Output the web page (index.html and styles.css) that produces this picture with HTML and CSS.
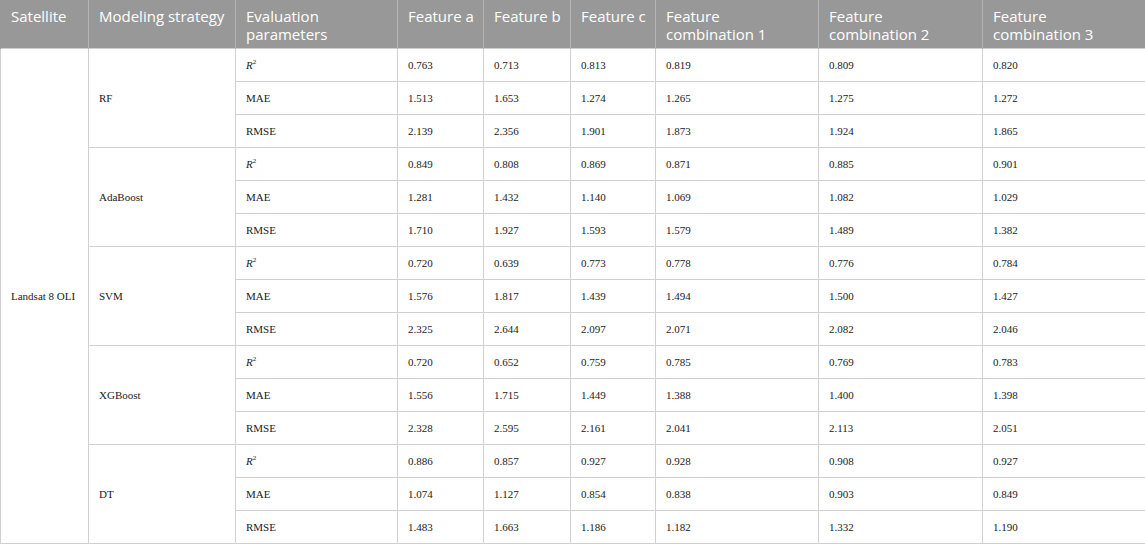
FILE: index.html
```html
<!DOCTYPE html>
<html>
<head>
<meta charset="utf-8">
<link rel="stylesheet" href="styles.css">
</head>
<body>
<table class="tbl">
<colgroup>
<col class="c1"><col class="c2"><col class="c3"><col class="c4"><col class="c5"><col class="c6"><col class="c7"><col class="c8"><col class="c9">
</colgroup>
<thead>
<tr>
<th>Satellite</th><th>Modeling strategy</th><th>Evaluation parameters</th><th>Feature a</th><th>Feature b</th><th>Feature c</th><th>Feature combination 1</th><th>Feature combination 2</th><th>Feature combination 3</th>
</tr>
</thead>
<tbody>
<tr><td rowspan="15" class="mid">Landsat 8 OLI</td><td rowspan="3" class="mid">RF</td><td><i>R</i><sup>2</sup></td><td>0.763</td><td>0.713</td><td>0.813</td><td>0.819</td><td>0.809</td><td>0.820</td></tr>
<tr><td>MAE</td><td>1.513</td><td>1.653</td><td>1.274</td><td>1.265</td><td>1.275</td><td>1.272</td></tr>
<tr><td>RMSE</td><td>2.139</td><td>2.356</td><td>1.901</td><td>1.873</td><td>1.924</td><td>1.865</td></tr>
<tr><td rowspan="3" class="mid">AdaBoost</td><td><i>R</i><sup>2</sup></td><td>0.849</td><td>0.808</td><td>0.869</td><td>0.871</td><td>0.885</td><td>0.901</td></tr>
<tr><td>MAE</td><td>1.281</td><td>1.432</td><td>1.140</td><td>1.069</td><td>1.082</td><td>1.029</td></tr>
<tr><td>RMSE</td><td>1.710</td><td>1.927</td><td>1.593</td><td>1.579</td><td>1.489</td><td>1.382</td></tr>
<tr><td rowspan="3" class="mid">SVM</td><td><i>R</i><sup>2</sup></td><td>0.720</td><td>0.639</td><td>0.773</td><td>0.778</td><td>0.776</td><td>0.784</td></tr>
<tr><td>MAE</td><td>1.576</td><td>1.817</td><td>1.439</td><td>1.494</td><td>1.500</td><td>1.427</td></tr>
<tr><td>RMSE</td><td>2.325</td><td>2.644</td><td>2.097</td><td>2.071</td><td>2.082</td><td>2.046</td></tr>
<tr><td rowspan="3" class="mid">XGBoost</td><td><i>R</i><sup>2</sup></td><td>0.720</td><td>0.652</td><td>0.759</td><td>0.785</td><td>0.769</td><td>0.783</td></tr>
<tr><td>MAE</td><td>1.556</td><td>1.715</td><td>1.449</td><td>1.388</td><td>1.400</td><td>1.398</td></tr>
<tr><td>RMSE</td><td>2.328</td><td>2.595</td><td>2.161</td><td>2.041</td><td>2.113</td><td>2.051</td></tr>
<tr><td rowspan="3" class="mid">DT</td><td><i>R</i><sup>2</sup></td><td>0.886</td><td>0.857</td><td>0.927</td><td>0.928</td><td>0.908</td><td>0.927</td></tr>
<tr><td>MAE</td><td>1.074</td><td>1.127</td><td>0.854</td><td>0.838</td><td>0.903</td><td>0.849</td></tr>
<tr><td>RMSE</td><td>1.483</td><td>1.663</td><td>1.186</td><td>1.182</td><td>1.332</td><td>1.190</td></tr>
</tbody>
</table>
</body>
</html>
```
FILE: styles.css
```css
html, body {
  margin: 0;
  padding: 0;
  background: #ffffff;
}
.tbl {
  width: 1145px;
  border-collapse: collapse;
  table-layout: fixed;
}
.c1 { width: 88px; }
.c2 { width: 147px; }
.c3 { width: 162px; }
.c4 { width: 86px; }
.c5 { width: 87px; }
.c6 { width: 85px; }
.c7 { width: 163px; }
.c8 { width: 164px; }
.c9 { width: 163px; }
.tbl th {
  background: #989898;
  color: #ffffff;
  font-family: "Open Sans", sans-serif;
  font-weight: 400;
  font-size: 15px;
  line-height: 18px;
  text-align: left;
  vertical-align: top;
  padding: 7px 2px 5px 10px;
  height: 36px;
  border-left: 1px solid #b4b4b4;
  white-space: normal;
}
.tbl th:nth-child(7),
.tbl th:nth-child(8),
.tbl th:nth-child(9),
.tbl th:nth-child(3) {
  padding-right: 10px;
}
.tbl th:first-child {
  border-left: 1px solid #989898;
}
.tbl td {
  font-family: "Liberation Serif", "Times New Roman", serif;
  font-size: 11px;
  color: #1a1a1a;
  height: 32px;
  padding: 0 10px;
  line-height: 14px;
  vertical-align: middle;
  border: 1px solid #d0d0d0;
}
.tbl td.mid {
  vertical-align: middle;
}
.tbl sup {
  font-size: 7px;
  line-height: 0;
  vertical-align: 5px;
}
```
